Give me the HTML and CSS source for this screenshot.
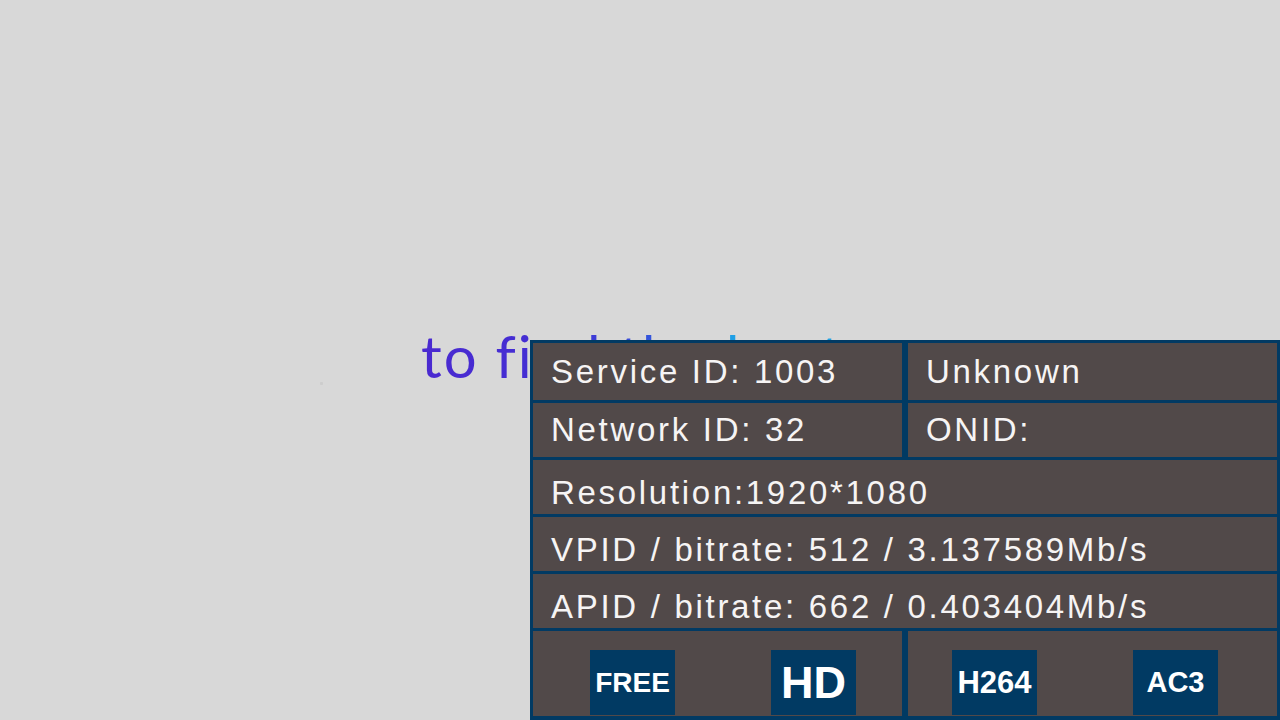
FILE: index.html
```html
<!DOCTYPE html>
<html lang="en">
<head>
<meta charset="utf-8">
<title>Channel info</title>
<link rel="stylesheet" href="styles.css">
</head>
<body>
<main class="screen">
  <p class="tagline"><span class="tagline-text">to find the best</span></p>
  <span class="speck"></span>

  <section class="osd">
    <div class="cell">Service ID: 1003</div>
    <div class="cell">Unknown</div>
    <div class="cell">Network ID: 32</div>
    <div class="cell">ONID:</div>
    <div class="cell cell-wide cell-low">Resolution:1920*1080</div>
    <div class="cell cell-wide cell-low">VPID / bitrate: 512 / 3.137589Mb/s</div>
    <div class="cell cell-wide cell-low">APID / bitrate: 662 / 0.403404Mb/s</div>
    <div class="cell badges badges-left">
      <span class="badge badge-free">FREE</span>
      <span class="badge badge-hd">HD</span>
    </div>
    <div class="cell badges badges-right">
      <span class="badge badge-h264">H264</span>
      <span class="badge badge-ac3">AC3</span>
    </div>
  </section>
</main>
</body>
</html>
```

FILE: styles.css
```css
html, body {
  margin: 0;
  padding: 0;
}

body {
  background: #d8d8d8;
  font-family: "Liberation Sans", Arial, sans-serif;
}

.screen {
  position: relative;
  width: 1280px;
  height: 720px;
  overflow: hidden;
  box-sizing: border-box;
  padding: 324px 0 0 421px;
}

.tagline {
  margin: 0;
  font-family: Lato, "Open Sans", sans-serif;
  font-weight: 400;
  font-size: 58px;
  line-height: 64px;
  white-space: nowrap;
  letter-spacing: 2px;
}

.tagline-text {
  background: linear-gradient(90deg, #4a29d0 0%, #4230d4 35%, #3356dc 55%, #1ea3e6 75%, #1ea3e6 100%);
  -webkit-background-clip: text;
  background-clip: text;
  color: transparent;
}

.speck {
  position: absolute;
  left: 320px;
  top: 382px;
  width: 3px;
  height: 3px;
  border-radius: 1px;
  background: #cdcdcd;
}

.osd {
  position: absolute;
  right: 0;
  bottom: 0;
  width: 750px;
  height: 380px;
  box-sizing: border-box;
  padding: 3px 3px 4px 3px;
  background: #013a63;
  display: grid;
  grid-template-columns: 369px 369px;
  grid-template-rows: 57px 54px 54px 54px 54px 85px;
  column-gap: 6px;
  row-gap: 3px;
}

.cell {
  background: #514949;
  color: #f6f4f4;
  font-size: 33px;
  letter-spacing: 2.7px;
  padding-left: 18px;
  display: flex;
  align-items: center;
  white-space: nowrap;
  overflow: hidden;
  box-sizing: border-box;
}

.cell-wide {
  grid-column: 1 / span 2;
}

.cell-low {
  padding-top: 11px;
}

.badges {
  align-items: flex-start;
  padding-top: 19px;
  gap: 96px;
  letter-spacing: 0;
}

.badges-left {
  padding-left: 57px;
}

.badges-right {
  padding-left: 44px;
}

.badge {
  width: 85px;
  height: 65px;
  flex: none;
  background: #013a63;
  color: #ffffff;
  font-weight: bold;
  display: flex;
  align-items: center;
  justify-content: center;
  line-height: 1;
}

.badge-free { font-size: 28px; }
.badge-hd { font-size: 45px; }
.badge-h264 { font-size: 31px; }
.badge-ac3 { font-size: 29px; }
```
